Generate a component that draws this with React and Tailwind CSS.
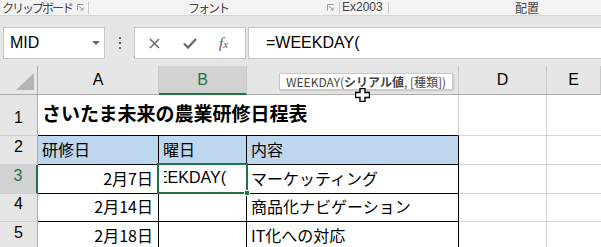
import React from 'react';

const GRID = 'border-[#d4d4d4]';

function Launcher({ className = '' }) {
  return (
    <svg className={className} width="7" height="7" viewBox="0 0 7 7" fill="none" stroke="#9a9a9a" strokeWidth="1">
      <path d="M0.5 6.5V0.5H6.5" />
      <path d="M2.5 2.5L6 6M6 3.5V6H3.5" />
    </svg>
  );
}

function ColHeader({ label, selected }) {
  return (
    <div
      className={`flex items-center justify-center h-[29px] border-r border-[#c8c8c8] text-[16px] font-['Liberation_Sans',sans-serif] ${
        selected ? 'bg-[#d2d2d2] text-[#217346] border-b-2 border-b-[#217346]' : 'bg-[#e6e6e6] border-b border-b-[#ababab]'
      }`}
    >
      {label}
    </div>
  );
}

function RowHeader({ n, h, selected }) {
  return (
    <div
      className={`flex items-end justify-center pb-[5px] border-b border-b-[#d0d0d0] text-[16px] font-['Liberation_Sans',sans-serif] ${h} ${
        selected ? 'bg-[#d2d2d2] text-[#217346] border-r-2 border-r-[#217346]' : 'bg-[#e6e6e6] border-r border-r-[#ababab]'
      }`}
    >
      {n}
    </div>
  );
}

export default function App() {
  return (
    <div className="relative w-[601px] h-[247px] overflow-hidden bg-white text-black font-['Noto_Sans_CJK_JP',sans-serif]">
      {/* ribbon group labels */}
      <div className="flex h-[16px] bg-[#f3f3f3] border-b border-[#d5d5d5] text-[12px] leading-[15px] text-[#444]">
        <div className="flex items-center w-[89px] pl-[2px]">
          <span className="tracking-[-2px]">クリップボード</span>
          <Launcher className="ml-auto mr-[4px]" />
          <span className="w-px h-[12px] bg-[#c8c8c8]" />
        </div>
        <div className="flex items-center w-[251px]">
          <span className="ml-[99px] tracking-[-2px]">フォント</span>
          <Launcher className="ml-auto mr-[5px]" />
          <span className="w-px h-[12px] bg-[#c8c8c8]" />
        </div>
        <div className="flex items-center w-[49px]">
          <span className="ml-[2px] font-['Liberation_Sans',sans-serif]">Ex2003</span>
          <span className="ml-auto w-px h-[12px] bg-[#c8c8c8]" />
        </div>
        <div className="flex items-center">
          <span className="ml-[126px]">配置</span>
        </div>
      </div>

      {/* formula bar */}
      <div className="flex items-start h-[50px] pt-[11px] bg-[#e6e6e6]">
        <div className="flex items-center ml-[3px] w-[102px] h-[32px] bg-white border border-[#c6c6c6] pl-[6px] text-[16px] font-['Liberation_Sans',sans-serif]">
          MID
          <svg className="ml-auto mr-[4px]" width="8" height="4" viewBox="0 0 8 4">
            <path d="M0 0H8L4 4Z" fill="#666" />
          </svg>
        </div>
        <div className="flex flex-col gap-[3px] ml-[14px] mt-[10px]">
          <span className="w-[2px] h-[2px] bg-[#666]" />
          <span className="w-[2px] h-[2px] bg-[#666]" />
          <span className="w-[2px] h-[2px] bg-[#666]" />
        </div>
        <div className="flex items-center ml-[13px] w-[112px] h-[32px] bg-white border border-[#c6c6c6]">
          <svg className="ml-[14px]" width="11" height="11" viewBox="0 0 11 11" stroke="#6a6a6a" strokeWidth="1.5">
            <path d="M1 1L10 10M10 1L1 10" />
          </svg>
          <svg className="ml-[23px]" width="14" height="11" viewBox="0 0 14 11" fill="none" stroke="#6a6a6a" strokeWidth="2.4">
            <path d="M1 5.5L5 9.5L13 1" />
          </svg>
          <span className="ml-[22px] italic text-[15px] text-[#555] font-['Liberation_Serif',serif] leading-none">
            f<span className="text-[11px]">x</span>
          </span>
        </div>
        <div className="flex items-center flex-1 ml-[2px] h-[32px] bg-white border border-r-0 border-[#c6c6c6] pl-[17px] text-[16px] font-['Liberation_Sans',sans-serif]">
          =WEEKDAY(
        </div>
      </div>

      {/* sheet */}
      <div className="grid grid-cols-[38px_121px_88px_212px_88px_1fr]">
        {/* column headers */}
        <div className="relative h-[29px] bg-[#e6e6e6] border-r border-b border-[#ababab]">
          <svg className="absolute left-[16px] top-[7px]" width="18" height="17" viewBox="0 0 18 17">
            <path d="M18 0V17H0Z" fill="#b4b4b4" />
          </svg>
        </div>
        <ColHeader label="A" />
        <ColHeader label="B" selected />
        <ColHeader label="C" />
        <ColHeader label="D" />
        <ColHeader label="E" />

        {/* row 1 */}
        <RowHeader n="1" h="h-[41px]" />
        <div className="flex items-end h-[41px] pl-[4px] pb-[9px] border-b border-black">
          <span className="relative z-10 whitespace-nowrap text-[19px] font-bold leading-[26px]">
            さいたま未来の農業研修日程表
          </span>
        </div>
        <div className="h-[41px] border-b border-black" />
        <div className={`h-[41px] border-b border-b-black border-r ${GRID}`} />
        <div className={`h-[41px] border-r border-b ${GRID}`} />
        <div className={`h-[41px] border-b ${GRID}`} />

        {/* row 2 */}
        <RowHeader n="2" h="h-[29px]" />
        <div className="flex items-end h-[29px] pl-[4px] pb-[4px] bg-[#bdd7ee] border-r border-b border-black text-[16px] leading-[22px]">研修日</div>
        <div className="flex items-end h-[29px] pl-[4px] pb-[4px] bg-[#bdd7ee] border-r border-b border-black text-[16px] leading-[22px]">曜日</div>
        <div className="flex items-end h-[29px] pl-[4px] pb-[4px] bg-[#bdd7ee] border-r border-b border-black text-[16px] leading-[22px]">内容</div>
        <div className={`h-[29px] border-r border-b ${GRID}`} />
        <div className={`h-[29px] border-b ${GRID}`} />

        {/* row 3 */}
        <RowHeader n="3" h="h-[29px]" selected />
        <div className="flex items-end justify-end h-[29px] pr-[5px] pb-[4px] border-r border-b border-black text-[16px] leading-[22px]">2月7日</div>
        <div className="flex h-[29px] pl-[5px] pr-[20px] pb-[4px] border-r border-b border-black text-[16px] leading-[22px] font-['Liberation_Sans',sans-serif]">
          <div className="flex flex-1 items-end justify-end overflow-hidden">
            <span className="whitespace-nowrap">=WEEKDAY(</span>
          </div>
        </div>
        <div className="flex items-end h-[29px] pl-[4px] pb-[4px] border-r border-b border-black text-[16px] leading-[22px]">マーケッティング</div>
        <div className={`h-[29px] border-r border-b ${GRID}`} />
        <div className={`h-[29px] border-b ${GRID}`} />

        {/* row 4 */}
        <RowHeader n="4" h="h-[28px]" />
        <div className="flex items-end justify-end h-[28px] pr-[5px] pb-[4px] border-r border-b border-black text-[16px] leading-[22px]">2月14日</div>
        <div className="h-[28px] border-r border-b border-black" />
        <div className="flex items-end h-[28px] pl-[4px] pb-[4px] border-r border-b border-black text-[16px] leading-[22px]">商品化ナビゲーション</div>
        <div className={`h-[28px] border-r border-b ${GRID}`} />
        <div className={`h-[28px] border-b ${GRID}`} />

        {/* row 5 */}
        <RowHeader n="5" h="h-[29px]" />
        <div className="flex items-end justify-end h-[29px] pr-[5px] pb-[4px] border-r border-b border-black text-[16px] leading-[22px]">2月18日</div>
        <div className="h-[29px] border-r border-b border-black" />
        <div className="flex items-end h-[29px] pl-[4px] pb-[4px] border-r border-b border-black text-[16px] leading-[22px]">IT化への対応</div>
        <div className={`h-[29px] border-r border-b ${GRID}`} />
        <div className={`h-[29px] border-b ${GRID}`} />
      </div>

      {/* active cell B3 outline + fill handle */}
      <div className="absolute left-[157px] top-[163px] w-[91px] h-[31px] border-2 border-[#217346]">
        <span className="absolute -right-[4px] -bottom-[4px] w-[6px] h-[6px] bg-[#217346] border border-white" />
      </div>

      {/* function argument tooltip */}
      <div className="absolute left-[279px] top-[73px] flex items-center h-[17px] px-[6px] bg-white border border-[#c8c8c8] shadow-[1px_1px_2px_rgba(0,0,0,0.15)] text-[12px] leading-none text-[#444] whitespace-nowrap">
        WEEKDAY(<span className="font-bold">シリアル値</span>, [種類])
      </div>

      {/* mouse cursor */}
      <svg className="absolute left-[355px] top-[88px]" width="15" height="14" viewBox="0 0 15 14">
        <path d="M5 0.5H10V4.5H14.5V9.5H10V13.5H5V9.5H0.5V4.5H5Z" fill="#fff" stroke="#000" strokeWidth="1.4" />
      </svg>
    </div>
  );
}
